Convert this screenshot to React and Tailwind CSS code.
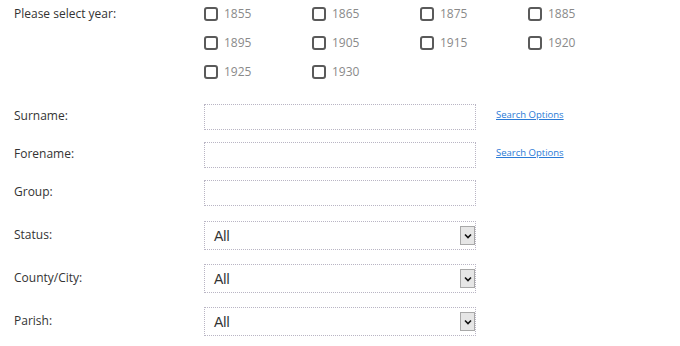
const YEARS = ['1855', '1865', '1875', '1885', '1895', '1905', '1915', '1920', '1925', '1930']

function YearBox({ year }) {
  return (
    <label className="flex items-center h-[29px] gap-[6px] -mt-[1px] mb-[1px]">
      <span className="w-[14px] h-[14px] border-2 border-[#5a5a5a] rounded-[3px] bg-white" />
      <span className="text-[12px] text-[#8a8a8a]">{year}</span>
    </label>
  )
}

function TextRow({ label, link }) {
  return (
    <div className="flex items-center h-[26px]">
      <div className="w-[190px] text-[12px] text-[#333] -mt-[2px]">{label}</div>
      <div className="w-[272px] h-[26px] border border-dotted border-[#b9b5c4] bg-white" />
      {link && (
        <a href="#" className="ml-[20px] -mt-[4px] text-[9.5px] text-[#2a7ad6] underline">Search Options</a>
      )}
    </div>
  )
}

function SelectRow({ label }) {
  return (
    <div className="flex items-center h-[29px]">
      <div className="w-[190px] text-[12px] text-[#333] -mt-[2px]">{label}</div>
      <div className="w-[272px] h-[29px] border border-dotted border-[#b9b5c4] bg-white flex items-center justify-between pl-[9px] pr-0">
        <span className="text-[14px] text-[#333] font-['Liberation_Sans',Arial,sans-serif] mt-[2px]">All</span>
        <span className="w-[15px] h-[19px] bg-[#e6e6e6] border border-[#a8a8a8] flex items-center justify-center">
          <svg width="8" height="6" viewBox="0 0 8 6">
            <path d="M1 1.5 L4 4.5 L7 1.5" stroke="#111" strokeWidth="1.6" fill="none" />
          </svg>
        </span>
      </div>
    </div>
  )
}

export default function App() {
  return (
    <main className="w-[680px] h-[346px] bg-white overflow-hidden font-['Open_Sans',sans-serif] pl-[14px]">
      <div className="flex">
        <div className="w-[190px] text-[12px] text-[#333] pt-[5px]">Please select year:</div>
        <div className="grid grid-cols-[108px_108px_108px_108px]">
          {YEARS.map((y) => <YearBox key={y} year={y} />)}
        </div>
      </div>

      <div className="flex flex-col mt-[17px] gap-[12px]">
        <TextRow label="Surname:" link />
        <TextRow label="Forename:" link />
        <TextRow label="Group:" />
      </div>

      <div className="flex flex-col mt-[15px] gap-[14px]">
        <SelectRow label="Status:" />
        <SelectRow label="County/City:" />
        <SelectRow label="Parish:" />
      </div>
    </main>
  )
}
